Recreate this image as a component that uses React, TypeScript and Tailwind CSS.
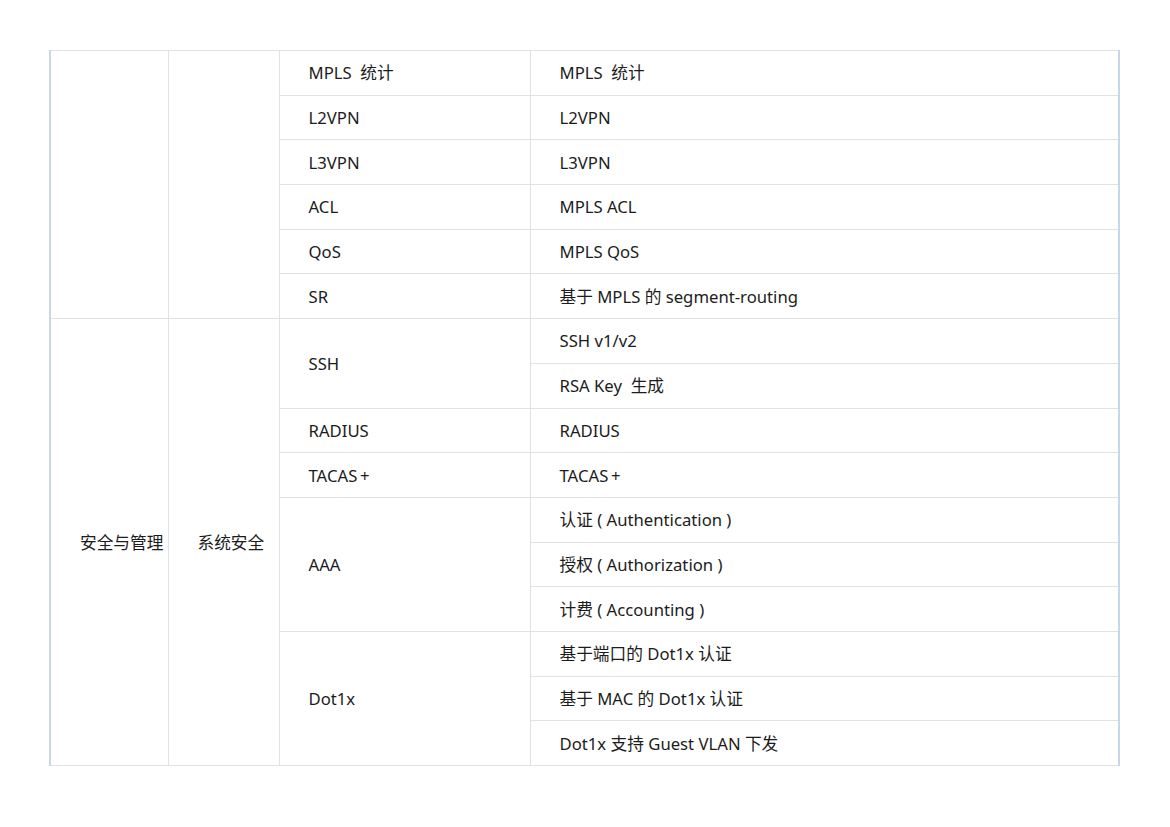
import React from "react";

type Row = {
  c1?: { text: string; span: number };
  c2?: { text: string; span: number };
  c3?: { text: string; span: number };
  c4: string;
};

const rows: Row[] = [
  { c1: { text: "", span: 6 }, c2: { text: "", span: 6 }, c3: { text: "MPLS\u00a0 统计", span: 1 }, c4: "MPLS\u00a0 统计" },
  { c3: { text: "L2VPN", span: 1 }, c4: "L2VPN" },
  { c3: { text: "L3VPN", span: 1 }, c4: "L3VPN" },
  { c3: { text: "ACL", span: 1 }, c4: "MPLS ACL" },
  { c3: { text: "QoS", span: 1 }, c4: "MPLS QoS" },
  { c3: { text: "SR", span: 1 }, c4: "基于 MPLS 的 segment-routing" },
  { c1: { text: "安全与管理", span: 10 }, c2: { text: "系统安全", span: 10 }, c3: { text: "SSH", span: 2 }, c4: "SSH v1/v2" },
  { c4: "RSA Key\u00a0 生成" },
  { c3: { text: "RADIUS", span: 1 }, c4: "RADIUS" },
  { c3: { text: "TACAS\u2009+", span: 1 }, c4: "TACAS\u2009+" },
  { c3: { text: "AAA", span: 3 }, c4: "认证\u00a0( Authentication )" },
  { c4: "授权\u00a0( Authorization )" },
  { c4: "计费\u00a0( Accounting )" },
  { c3: { text: "Dot1x", span: 3 }, c4: "基于端口的 Dot1x 认证" },
  { c4: "基于 MAC 的 Dot1x 认证" },
  { c4: "Dot1x 支持 Guest VLAN 下发" },
];

const cell = "border border-[#e2e2e2] pl-[29px] pr-0 align-middle whitespace-nowrap";

export default function App() {
  return (
    <div
      className="min-h-[827px] w-[1170px] bg-white pt-[50px] pl-[49px] text-[16.7px] text-[#1c1c1c]"
      style={{ fontFamily: '"Noto Sans", "Noto Sans CJK SC", sans-serif' }}
    >
      <table className="w-[1071px] table-fixed border-collapse border-l-2 border-r-2 border-l-[#c7d6ec] border-r-[#c7d6ec]">
        <colgroup>
          <col className="w-[118px]" />
          <col className="w-[111px]" />
          <col className="w-[251px]" />
          <col />
        </colgroup>
        <tbody>
          {rows.map((r, i) => (
            <tr key={i} className="h-[44.7px]">
              {r.c1 && (
                <td rowSpan={r.c1.span} className={`${cell} border-l-2 border-l-[#c7d6ec]`}>
                  {r.c1.text}
                </td>
              )}
              {r.c2 && (
                <td rowSpan={r.c2.span} className={cell}>
                  {r.c2.text}
                </td>
              )}
              {r.c3 && (
                <td rowSpan={r.c3.span} className={cell}>
                  {r.c3.text}
                </td>
              )}
              <td className={`${cell} border-r-2 border-r-[#c7d6ec]`}>{r.c4}</td>
            </tr>
          ))}
        </tbody>
      </table>
    </div>
  );
}
